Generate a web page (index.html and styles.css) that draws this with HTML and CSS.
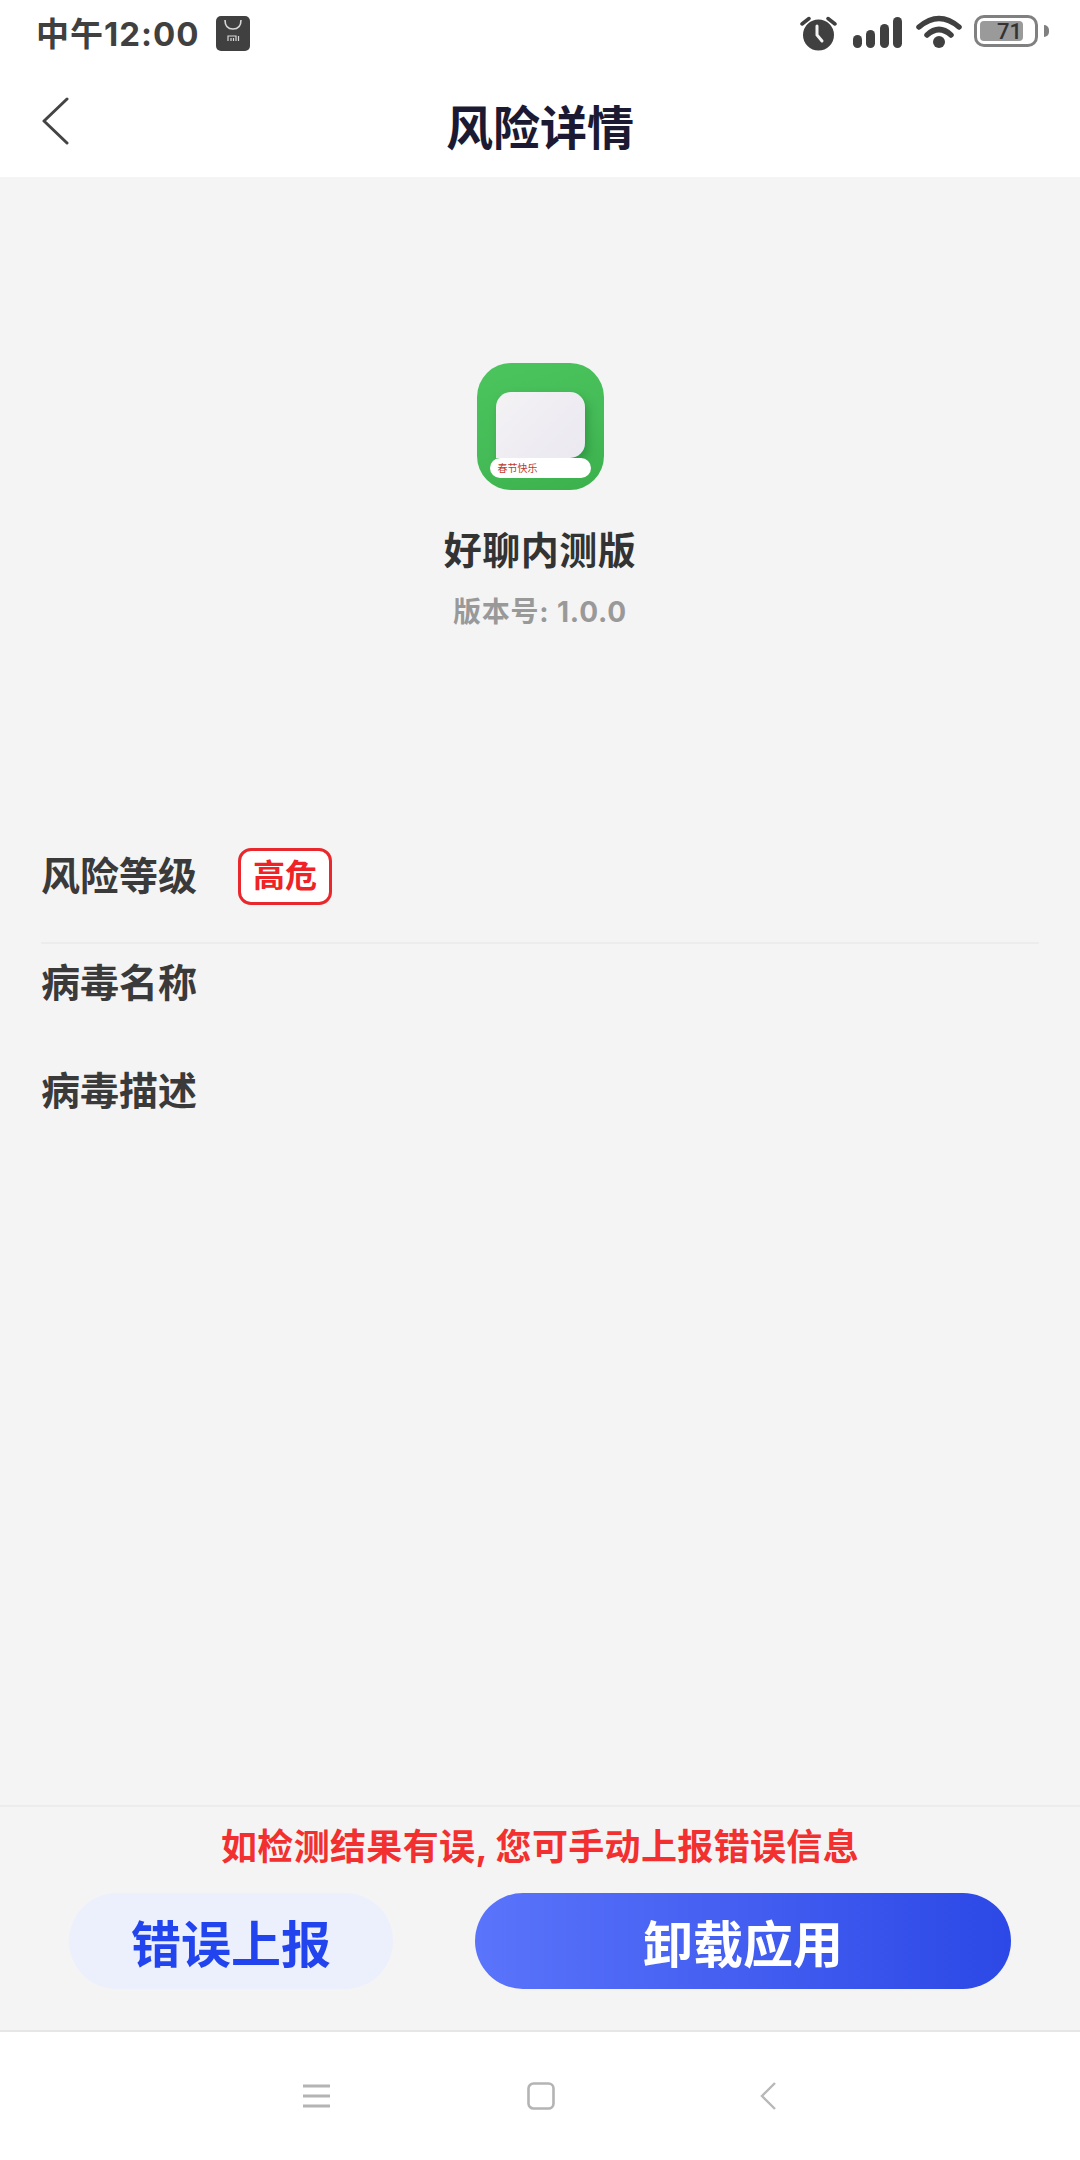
FILE: index.html
```html
<!DOCTYPE html>
<html lang="zh-CN">
<head>
  <meta charset="UTF-8" />
  <meta name="viewport" content="width=device-width, initial-scale=1.0" />
  <title>风险详情</title>
  <link rel="stylesheet" href="styles.css">
</head>
<body>
  <div class="status-bar">
    <div class="status-left">
      <span class="status-time">中午12:00</span>
      <svg class="mi-store" viewBox="0 0 34 35" xmlns="http://www.w3.org/2000/svg">
        <rect width="34" height="35" rx="5" fill="#404040"/>
        <path d="M9 4 Q9 13 17 13 Q25 13 25 4" fill="none" stroke="#d8d8d8" stroke-width="1.600"/>
        <path d="M12 25 V20 H20 V25 M15 25 V22 M17.500 25 V22 M22.500 20 V25" fill="none" stroke="#d8d8d8" stroke-width="1.200"/>
      </svg>
    </div>
    <div class="status-right">
      <svg class="ic-alarm" viewBox="0 0 37 36" xmlns="http://www.w3.org/2000/svg">
        <circle cx="18.500" cy="20" r="15.500" fill="#404040"/>
        <path d="M2 9 L9 3.500 M35 9 L28 3.500" stroke="#404040" stroke-width="3.500" stroke-linecap="round"/>
        <path d="M17 11 V20 L22 26" fill="none" stroke="#f4f4f4" stroke-width="3" stroke-linecap="round"/>
      </svg>
      <svg class="ic-signal" viewBox="0 0 49 31" xmlns="http://www.w3.org/2000/svg">
        <rect x="0" y="18" width="9" height="13" rx="4.500" fill="#404040"/>
        <rect x="13" y="13" width="9" height="18" rx="4.500" fill="#404040"/>
        <rect x="27" y="7" width="9" height="24" rx="4.500" fill="#404040"/>
        <rect x="40" y="0" width="9" height="31" rx="4.500" fill="#404040"/>
      </svg>
      <svg class="ic-wifi" viewBox="0 0 46 35" xmlns="http://www.w3.org/2000/svg">
        <path d="M3 13 Q23 -4 43 13" fill="none" stroke="#404040" stroke-width="5.500" stroke-linecap="round"/>
        <path d="M11 21 Q23 10 35 21" fill="none" stroke="#404040" stroke-width="5.500" stroke-linecap="round"/>
        <circle cx="23" cy="28" r="6" fill="#404040"/>
      </svg>
      <div class="battery">
        <div class="battery-body">
          <div class="battery-fill"></div>
          <span class="battery-num">71</span>
        </div>
        <div class="battery-tip"></div>
      </div>
    </div>
  </div>

  <header class="top-bar">
    <svg class="back-icon" viewBox="0 0 27 48" xmlns="http://www.w3.org/2000/svg">
      <path d="M25 2 L2 24 L25 46" fill="none" stroke="#444" stroke-width="3" stroke-linecap="round" stroke-linejoin="round"/>
    </svg>
    <h1>风险详情</h1>
  </header>

  <main class="content">
    <section class="app-info">
      <div class="app-icon">
        <div class="bubble"></div>
        <div class="ribbon">春节快乐</div>
      </div>
      <div class="app-name">好聊内测版</div>
      <div class="app-version">版本号: 1.0.0</div>
    </section>

    <section class="detail-list">
      <div class="detail-row level-row">
        <span class="detail-label">风险等级</span>
        <span class="level-badge">高危</span>
      </div>
      <div class="detail-row name-row">
        <span class="detail-label">病毒名称</span>
      </div>
      <div class="detail-row desc-row">
        <span class="detail-label">病毒描述</span>
      </div>
    </section>
  </main>

  <footer class="action-bar">
    <p class="report-tip">如检测结果有误, 您可手动上报错误信息</p>
    <div class="action-buttons">
      <button class="btn btn-report">错误上报</button>
      <button class="btn btn-uninstall">卸载应用</button>
    </div>
  </footer>

  <nav class="nav-bar">
    <svg class="nav-menu" viewBox="0 0 27 24" xmlns="http://www.w3.org/2000/svg">
      <path d="M0 2 H27 M0 12 H27 M0 22 H27" stroke="#b4b4b4" stroke-width="3"/>
    </svg>
    <svg class="nav-home" viewBox="0 0 28 28" xmlns="http://www.w3.org/2000/svg">
      <rect x="1.500" y="1.500" width="25" height="25" rx="5" fill="none" stroke="#b4b4b4" stroke-width="2.600"/>
    </svg>
    <svg class="nav-back" viewBox="0 0 16 28" xmlns="http://www.w3.org/2000/svg">
      <path d="M15 1 L2 14 L15 27" fill="none" stroke="#b8b8b8" stroke-width="2.400"/>
    </svg>
  </nav>
</body>
</html>
```

FILE: styles.css
```css
* {
  box-sizing: border-box;
  margin: 0;
  padding: 0;
}

html, body {
  width: 1080px;
  height: 2160px;
  overflow: hidden;
}

body {
  display: flex;
  flex-direction: column;
  font-family: "Inter", "Noto Sans CJK SC", sans-serif;
  background: #f4f4f4;
  color: #333;
}

/* status bar */
.status-bar {
  height: 70px;
  background: #fff;
  display: flex;
  justify-content: space-between;
  padding: 15px 31px 0 36px;
}

.status-left {
  display: flex;
  align-items: flex-start;
  gap: 16px;
}

.status-time {
  font-size: 33px;
  line-height: 38px;
  font-weight: 700;
  color: #404040;
  letter-spacing: 1px;
}

.mi-store {
  width: 34px;
  height: 35px;
  margin-top: 1px;
}

.status-right {
  display: flex;
  align-items: flex-start;
}

.ic-alarm {
  width: 37px;
  height: 36px;
}

.ic-signal {
  width: 49px;
  height: 31px;
  margin: 2px 0 0 16px;
}

.ic-wifi {
  width: 46px;
  height: 35px;
  margin: -1px 0 0 14px;
}

.battery {
  display: flex;
  align-items: center;
  margin-left: 12px;
}

.battery-body {
  position: relative;
  width: 64px;
  height: 32px;
  border: 3px solid #808080;
  border-radius: 10px;
  padding: 3px;
}

.battery-fill {
  width: 82%;
  height: 100%;
  background: #9a9a9a;
  border-radius: 4px;
}

.battery-num {
  position: absolute;
  top: 0;
  left: 20px;
  font-family: "Roboto", sans-serif;
  font-size: 22px;
  line-height: 27px;
  font-weight: 500;
  color: #333;
}

.battery-tip {
  width: 5px;
  height: 12px;
  margin-left: 6px;
  background: #808080;
  border-radius: 0 6px 6px 0;
}

/* top bar */
.top-bar {
  position: relative;
  height: 107px;
  background: #fff;
  display: flex;
  align-items: center;
  justify-content: center;
}

.back-icon {
  position: absolute;
  left: 42px;
  top: 27px;
  width: 27px;
  height: 48px;
}

.top-bar h1 {
  font-size: 47px;
  line-height: 60px;
  font-weight: 700;
  color: #1c1a33;
  margin-top: 8px;
}

/* main area */
.content {
  flex: 1;
  padding: 186px 41px 0;
  display: flex;
  flex-direction: column;
}

.app-info {
  display: flex;
  flex-direction: column;
  align-items: center;
}

.app-icon {
  position: relative;
  width: 127px;
  height: 127px;
  border-radius: 34px;
  background: linear-gradient(160deg, #4cc55e 0%, #45bc57 55%, #3bb04c 100%);
}

.bubble {
  position: absolute;
  left: 19px;
  top: 29px;
  width: 89px;
  height: 66px;
  border-radius: 15px 15px 15px 0;
  background: linear-gradient(135deg, #f3f2f4, #ebe8f1);
  box-shadow: 3px 5px 10px rgba(20, 90, 40, 0.35);
}

.ribbon {
  position: absolute;
  left: 13px;
  top: 95px;
  width: 101px;
  height: 20px;
  border-radius: 10px;
  background: #fff;
  padding-left: 8px;
  font-size: 10px;
  line-height: 20px;
  color: #c0392b;
}

.app-name {
  margin-top: 34px;
  font-size: 38px;
  line-height: 52px;
  font-weight: 700;
  letter-spacing: 0.5px;
  color: #333;
}

.app-version {
  margin-top: 16px;
  font-size: 28px;
  line-height: 40px;
  font-weight: 700;
  letter-spacing: 0.8px;
  color: #999;
}

.detail-list {
  margin-top: 178px;
}

.detail-row {
  display: flex;
  align-items: center;
  font-size: 39px;
  font-weight: 700;
  color: #3a3a3a;
}

.detail-label {
  line-height: 52px;
}

.level-row {
  height: 134px;
  border-bottom: 2px solid #ececec;
}

.name-row {
  height: 78px;
}

.desc-row {
  height: 60px;
  margin-top: 39px;
}

.level-badge {
  margin-left: 41px;
  width: 94px;
  height: 57px;
  border: 3px solid #e8282c;
  border-radius: 13px;
  background: #fff;
  color: #ef2326;
  font-size: 32px;
  line-height: 49px;
  text-align: center;
}

/* bottom actions */
.action-bar {
  height: 225px;
  border-top: 2px solid #ececec;
  display: flex;
  flex-direction: column;
  align-items: center;
}

.report-tip {
  margin-top: 17px;
  font-size: 36px;
  line-height: 46px;
  font-weight: 700;
  letter-spacing: 0.35px;
  color: #f23030;
}

.action-buttons {
  margin-top: 23px;
  width: 100%;
  padding: 0 69px;
  display: flex;
  justify-content: space-between;
}

.btn {
  height: 96px;
  border: none;
  border-radius: 48px;
  font-family: inherit;
  font-size: 50px;
  font-weight: 700;
}

.btn-report {
  width: 324px;
  background: #eceffc;
  color: #2244ee;
}

.btn-uninstall {
  width: 536px;
  background: linear-gradient(90deg, #5a74fb, #2c48e6);
  color: #fff;
}

/* system nav */
.nav-bar {
  height: 130px;
  background: #fff;
  border-top: 2px solid #e6e6e6;
  display: flex;
  align-items: center;
}

.nav-menu {
  width: 27px;
  height: 24px;
  margin-left: 303px;
}

.nav-home {
  width: 28px;
  height: 28px;
  margin-left: 197px;
}

.nav-back {
  width: 16px;
  height: 28px;
  margin-left: 205px;
}
```
